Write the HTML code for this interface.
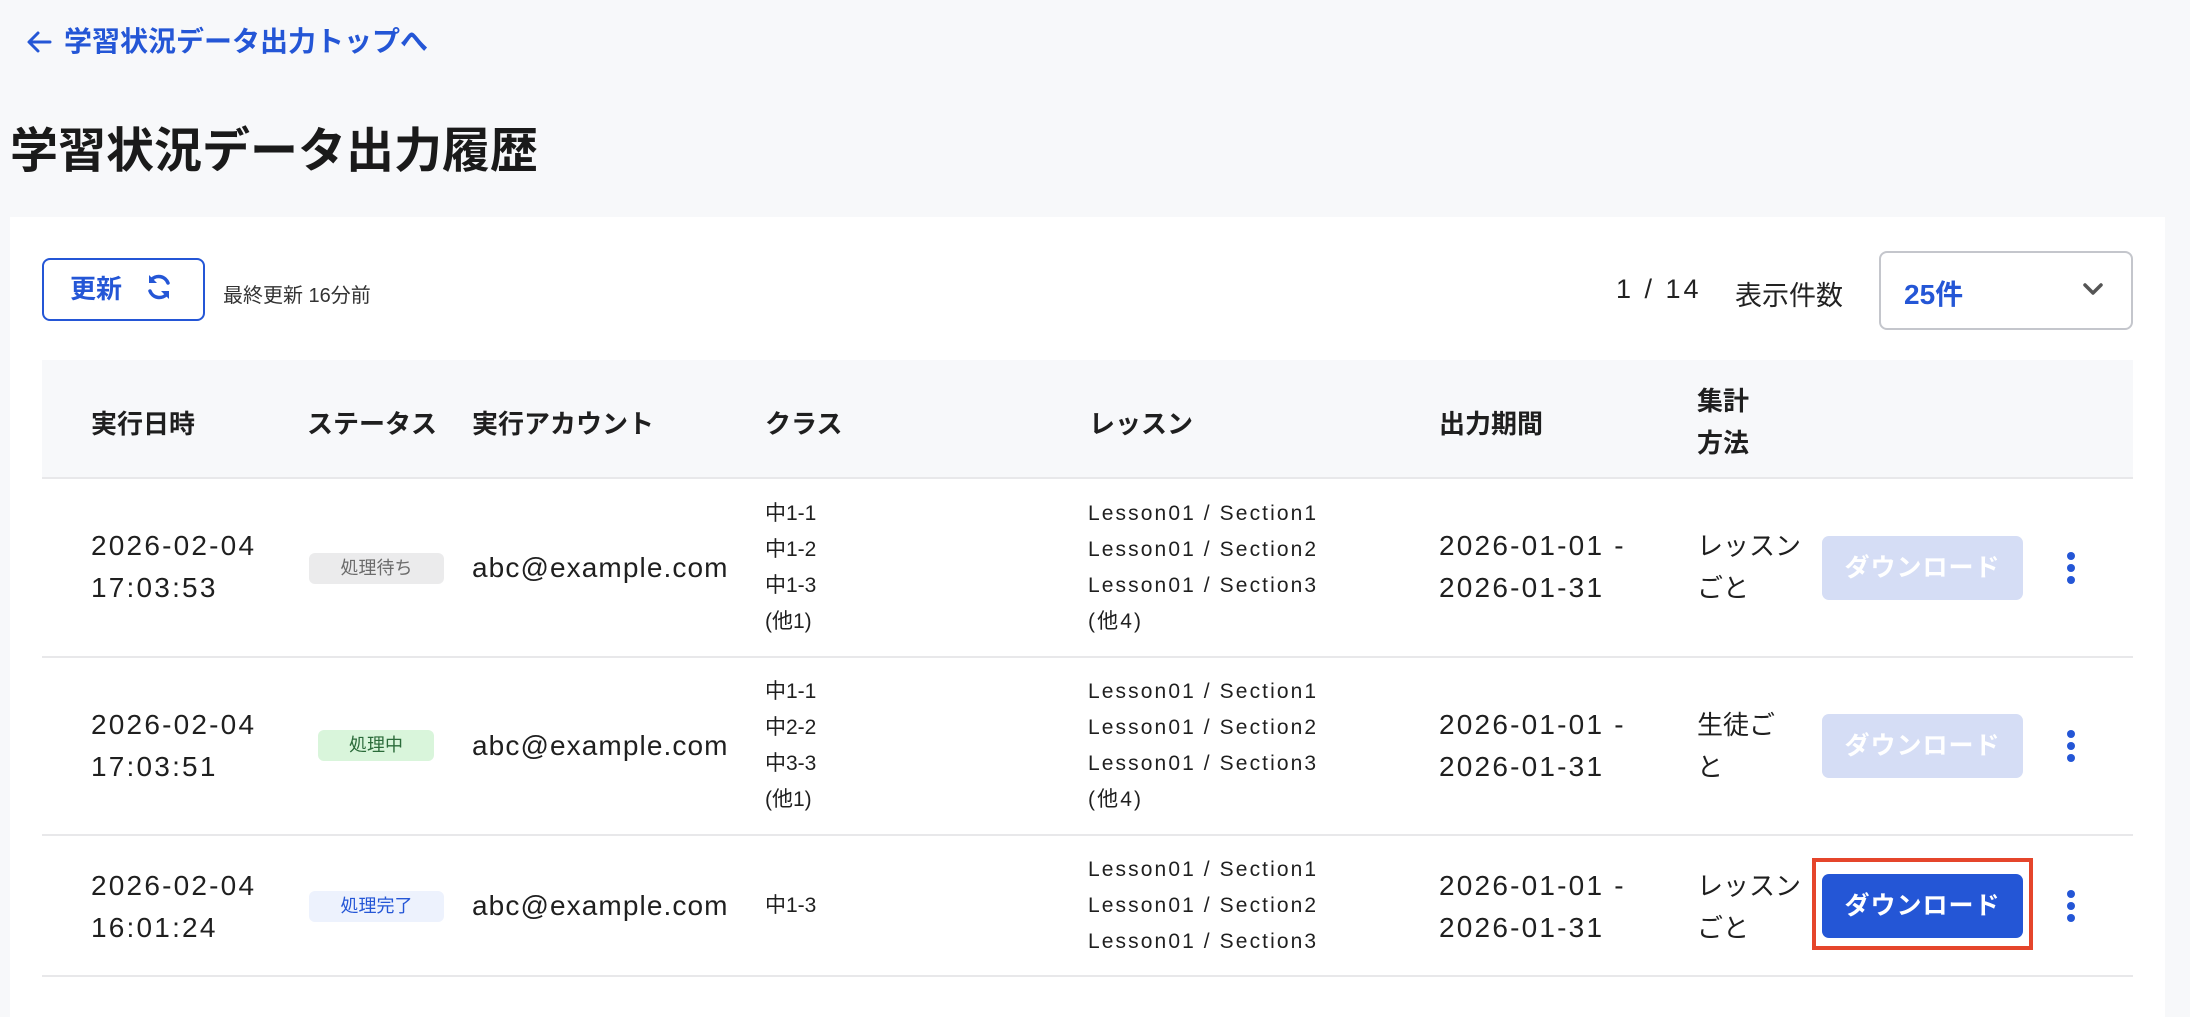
<!DOCTYPE html>
<html><head><meta charset="utf-8"><style>
*{margin:0;padding:0;box-sizing:border-box}
body{width:2190px;height:1000px;background:#f7f8fa;position:relative;overflow:hidden;font-family:"Liberation Sans","Noto Sans CJK JP",sans-serif;color:#1f1f1f}
.a{position:absolute;white-space:nowrap}
.card{position:absolute;left:10px;top:217px;width:2155px;height:800px;background:#fff}
.hd{position:absolute;left:42px;top:360px;width:2091px;height:119px;background:#f7f8fa;border-bottom:2px solid #e8e8ea}
.hl{position:absolute;left:42px;width:2091px;height:2px;background:#e8e8ea}
.th{font-size:26px;font-weight:bold;color:#1f1f1f}
.dt{font-size:28px;line-height:42px;letter-spacing:2.2px}
.jp{font-size:26px;line-height:42px}
.sm{font-size:21px;line-height:36px}
.ls{letter-spacing:2.1px}
.badge{position:absolute;height:31px;border-radius:6px;font-size:18px;line-height:31px;text-align:center}
.btn{position:absolute;left:1822px;width:201px;height:64px;border-radius:7px;color:#fff;font-size:25px;font-weight:bold;line-height:64px;text-align:center;letter-spacing:1px}
.dots{position:absolute;left:2067px;width:8px}
.dots i{display:block;width:8px;height:8px;border-radius:50%;background:#2456d6;margin-bottom:4px}
.em{font-size:28px;letter-spacing:1.1px}
</style></head><body>
<div class="a" style="left:26px;top:24px;font-size:28px;color:#2456d6;font-weight:600;line-height:36px">
<svg width="26" height="24" viewBox="0 0 26 24" style="vertical-align:-3px;margin-right:12px"><path d="M24 12H4M12 3L3 12l9 9" stroke="#2456d6" stroke-width="3" fill="none" stroke-linecap="round" stroke-linejoin="round"/></svg>学習状況データ出力トップへ</div>
<div class="a" style="left:10px;top:122px;font-size:48px;font-weight:bold;line-height:60px;color:#1a1a1a">学習状況データ出力履歴</div>
<div class="card"></div>
<div class="a" style="left:42px;top:258px;width:163px;height:63px;border:2px solid #2456d6;border-radius:8px;background:#fff"></div>
<div class="a" style="left:70px;top:272px;font-size:26px;font-weight:bold;color:#2456d6;line-height:34px">更新</div>
<svg class="a" style="left:144px;top:272px" width="30" height="30" viewBox="0 0 30 30"><path d="M24 11A10 10 0 0 0 7 8" stroke="#2456d6" stroke-width="3.5" fill="none" stroke-linecap="round"/><path d="M5 3v8h8z" fill="#2456d6"/><path d="M6 19a10 10 0 0 0 17 3" stroke="#2456d6" stroke-width="3.5" fill="none" stroke-linecap="round"/><path d="M25 27v-8h-8z" fill="#2456d6"/></svg>
<div class="a" style="left:223px;top:279px;font-size:20px;color:#333">最終更新 16分前</div>
<div class="a" style="left:1616px;top:274px;font-size:27px;color:#222;letter-spacing:3px">1 / 14</div>
<div class="a" style="left:1735px;top:274px;font-size:27px;color:#222">表示件数</div>
<div class="a" style="left:1879px;top:251px;width:254px;height:79px;border:2px solid #c4c6cc;border-radius:8px;background:#fff"></div>
<div class="a" style="left:1904px;top:273px;font-size:28px;font-weight:bold;color:#2456d6">25件</div>
<svg class="a" style="left:2082px;top:282px" width="22" height="14" viewBox="0 0 22 14"><path d="M3 3l8 8 8-8" stroke="#555" stroke-width="3.5" fill="none" stroke-linecap="round" stroke-linejoin="round"/></svg>
<div class="hd"></div>
<div class="a th" style="left:91px;top:404px">実行日時</div>
<div class="a th" style="left:307px;top:404px">ステータス</div>
<div class="a th" style="left:472px;top:404px">実行アカウント</div>
<div class="a th" style="left:765px;top:404px">クラス</div>
<div class="a th" style="left:1089px;top:404px">レッスン</div>
<div class="a th" style="left:1439px;top:404px">出力期間</div>
<div class="a th" style="left:1697px;top:380px;line-height:42px">集計<br>方法</div>
<div class="hl" style="top:656px"></div>
<div class="hl" style="top:834px"></div>
<div class="hl" style="top:975px"></div>
<!-- row1 -->
<div class="a dt" style="left:91px;top:525px">2026-02-04<br>17:03:53</div>
<div class="badge" style="left:309px;top:553px;width:135px;background:#ebebec;color:#6b6b6b">処理待ち</div>
<div class="a em" style="left:472px;top:552px">abc@example.com</div>
<div class="a sm" style="left:765px;top:496px">中1-1<br>中1-2<br>中1-3<br>(他1)</div>
<div class="a sm ls" style="left:1088px;top:496px">Lesson01 / Section1<br>Lesson01 / Section2<br>Lesson01 / Section3<br>(他4)</div>
<div class="a dt" style="left:1439px;top:525px">2026-01-01 -<br>2026-01-31</div>
<div class="a jp" style="left:1697px;top:525px">レッスン<br>ごと</div>
<div class="btn" style="top:536px;background:#d5ddf5">ダウンロード</div>
<div class="dots" style="top:552px"><i></i><i></i><i></i></div>
<!-- row2 -->
<div class="a dt" style="left:91px;top:704px">2026-02-04<br>17:03:51</div>
<div class="badge" style="left:318px;top:730px;width:116px;background:#d9f5db;color:#2b6b3a">処理中</div>
<div class="a em" style="left:472px;top:730px">abc@example.com</div>
<div class="a sm" style="left:765px;top:674px">中1-1<br>中2-2<br>中3-3<br>(他1)</div>
<div class="a sm ls" style="left:1088px;top:674px">Lesson01 / Section1<br>Lesson01 / Section2<br>Lesson01 / Section3<br>(他4)</div>
<div class="a dt" style="left:1439px;top:704px">2026-01-01 -<br>2026-01-31</div>
<div class="a jp" style="left:1697px;top:704px">生徒ご<br>と</div>
<div class="btn" style="top:714px;background:#d5ddf5">ダウンロード</div>
<div class="dots" style="top:730px"><i></i><i></i><i></i></div>
<!-- row3 -->
<div class="a dt" style="left:91px;top:865px">2026-02-04<br>16:01:24</div>
<div class="badge" style="left:309px;top:891px;width:135px;background:#edf2fd;color:#2456d6">処理完了</div>
<div class="a em" style="left:472px;top:890px">abc@example.com</div>
<div class="a sm" style="left:765px;top:888px">中1-3</div>
<div class="a sm ls" style="left:1088px;top:852px">Lesson01 / Section1<br>Lesson01 / Section2<br>Lesson01 / Section3</div>
<div class="a dt" style="left:1439px;top:865px">2026-01-01 -<br>2026-01-31</div>
<div class="a jp" style="left:1697px;top:865px">レッスン<br>ごと</div>
<div class="a" style="left:1812px;top:858px;width:221px;height:92px;border:4px solid #e5452b"></div>
<div class="btn" style="top:874px;background:#2456d6">ダウンロード</div>
<div class="dots" style="top:890px"><i></i><i></i><i></i></div>
</body></html>
